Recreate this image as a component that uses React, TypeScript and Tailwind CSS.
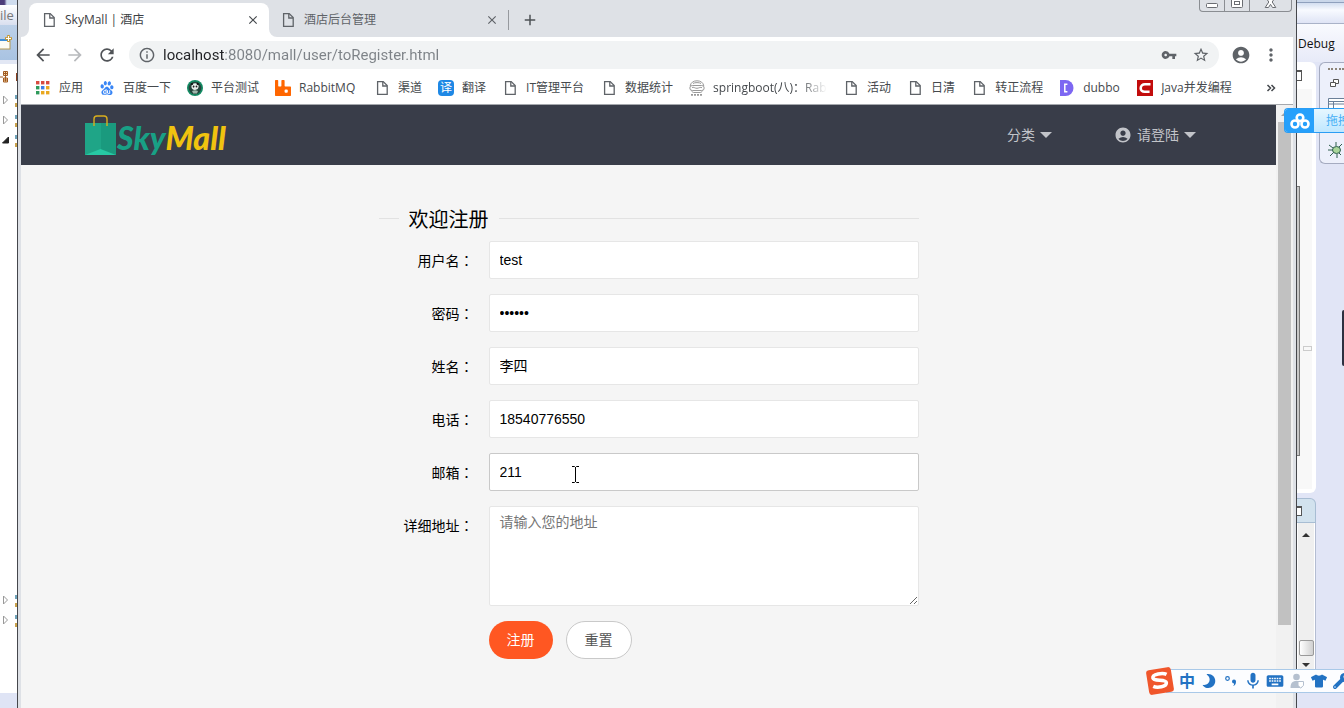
import React from 'react';
import { clsx } from 'clsx';
import {
  MdArrowBack, MdArrowForward, MdRefresh, MdInfoOutline, MdVpnKey, MdStarBorder,
  MdAccountCircle, MdMoreVert, MdClose, MdAdd, MdMic, MdKeyboard,
} from 'react-icons/md';
import { SiBaidu, SiRabbitmq } from 'react-icons/si';
import { FaMoon, FaTshirt, FaWrench } from 'react-icons/fa';

const uiFont = "font-['Open_Sans','Noto_Sans_CJK_SC',sans-serif]";
const pageFont = "font-['Liberation_Sans','Noto_Sans_CJK_SC',sans-serif]";

const FileIcon = () => (
  <svg viewBox="0 0 16 16" className="h-4 w-4 shrink-0" fill="none" stroke="#5f6368" strokeWidth="1.3">
    <path d="M3.6 1.6h5.6l4 4v8.8H3.6z" />
    <path d="M8.8 1.8v4.2h4.2" />
  </svg>
);

const AppsIcon = () => (
  <svg viewBox="0 0 16 16" className="h-4 w-4 shrink-0">
    {['#d84b40', '#d84b40', '#d84b40', '#2e9a5b', '#3d7ee8', '#e9a820', '#2e9a5b', '#e9a820', '#e9a820'].map((c, i) => (
      <rect key={i} x={1 + (i % 3) * 5} y={1 + Math.floor(i / 3) * 5} width="3.4" height="3.4" fill={c} />
    ))}
  </svg>
);

const PandaIcon = () => (
  <svg viewBox="0 0 16 16" className="h-4 w-4 shrink-0">
    <circle cx="8" cy="8" r="8" fill="#138a63" />
    <circle cx="8" cy="8" r="6.3" fill="#24443b" />
    <path d="M4.4 6.7c0-2.2 1.6-3.5 3.7-3.5s3.5 1.4 3.5 3.4-1.4 3.3-3.6 3.3-3.6-1.2-3.6-3.2z" fill="#e9efec" />
    <circle cx="5" cy="4" r="1.1" fill="#111" />
    <circle cx="10.7" cy="3.9" r="1.1" fill="#111" />
    <ellipse cx="6.6" cy="6.6" rx=".9" ry="1.1" fill="#222" />
    <ellipse cx="9.5" cy="6.5" rx=".9" ry="1.1" fill="#222" />
    <path d="M5 11c2-1 4-1 6 0l-1 2.4H6.2z" fill="#9fb5ab" />
  </svg>
);

const BurgerIcon = () => (
  <svg viewBox="0 0 16 16" className="h-4 w-4 shrink-0" fill="none" stroke="#999" strokeWidth="1">
    <path d="M1.2 6C1.6 2.6 4.4.8 8 .8s6.4 1.8 6.800 5.200" />
    <path d="M4 3.500c1.500-1.200 6.500-1.200 8 0" />
    <rect x=".8" y="5.500" width="14.400" height="5" rx="2.500" />
    <path d="M3 7.500c1.500-1 3 1 5 .8s3.500-1.500 5-.6" />
    <path d="M2.400 10.500c.6 1.500 1.600 2 2.600 2h6c1 0 2-.5 2.600-2" />
    <path d="M2 14.800h12" strokeDasharray="2 1" strokeWidth="1.800" />
  </svg>
);

const DubboIcon = () => (
  <svg viewBox="0 0 16 16" className="h-4 w-4 shrink-0">
    <path d="M1 0h5.500a8 8 0 0 1 0 16H1z" fill="#7d67f2" />
    <path d="M8.400 4.200H5.800v7.600h2.600" fill="none" stroke="#fff" strokeWidth="1.500" />
  </svg>
);

const CsdnIcon = () => (
  <svg viewBox="0 0 16 16" className="h-4 w-4 shrink-0">
    <rect width="16" height="16" fill="#c20c0c" />
    <path d="M13.500 4.300H8c-2.600 0-4.300 1.500-4.300 3.900 0 2.300 1.500 3.500 4 3.500h4.900" fill="none" stroke="#fff" strokeWidth="2.600" />
  </svg>
);

const TranslateIcon = () => (
  <span className="flex h-4 w-4 shrink-0 items-center justify-center rounded-sm bg-[#1e88e5] text-xs leading-4 text-white">译</span>
);

const bookmarks = [
  { label: '应用', icon: <AppsIcon /> },
  { label: '百度一下', icon: <SiBaidu className="h-4 w-4 shrink-0 p-px text-[#3885f5]" /> },
  { label: '平台测试', icon: <PandaIcon /> },
  { label: 'RabbitMQ', icon: <SiRabbitmq className="h-4 w-4 shrink-0 text-[#f60]" />, width: 'w-[59px]' },
  { label: '渠道', icon: <FileIcon /> },
  { label: '翻译', icon: <TranslateIcon /> },
  { label: 'IT管理平台', icon: <FileIcon />, width: 'w-[59px]' },
  { label: '数据统计', icon: <FileIcon /> },
  { label: 'springboot(八)：RabbitMQ', icon: <BurgerIcon />, width: 'w-[114px]', fade: true },
  { label: '活动', icon: <FileIcon /> },
  { label: '日清', icon: <FileIcon /> },
  { label: '转正流程', icon: <FileIcon /> },
  { label: 'dubbo', icon: <DubboIcon />, width: 'w-[38px]' },
  { label: 'Java并发编程', icon: <CsdnIcon />, width: 'w-[73px]' },
];

const TabFlare = ({ className }: { className: string }) => (
  <svg viewBox="0 0 8 8" className={clsx('absolute bottom-0 h-2 w-2', className)}>
    <path d="M8 0v8H0a8 8 0 0 0 8-8z" fill="#fff" />
  </svg>
);

const TitleBar = () => (
  <div className="flex h-[37px] shrink-0 pl-2">
    <div className="relative mt-[3px] flex w-[240px] items-center gap-2 rounded-t-lg bg-white pr-[9px] pl-3 text-xs text-[#3c4043]">
      <TabFlare className="-left-2" />
      <FileIcon />
      <span className="flex-1">SkyMall | 酒店</span>
      <button aria-label="关闭标签页"><MdClose className="h-3.5 w-3.5 text-[#45494d]" /></button>
      <TabFlare className="-right-2 -scale-x-100" />
    </div>
    <div className="mt-[3px] flex w-[239px] items-center gap-2 pr-[9px] pl-[11px] text-xs text-[#5f6368]">
      <FileIcon />
      <span className="flex-1">酒店后台管理</span>
      <button aria-label="关闭标签页"><MdClose className="h-3.5 w-3.5" /></button>
    </div>
    <div className="mt-2.5 h-5 w-px bg-[#96999e]" />
    <button aria-label="新标签页" className="mt-[3px] ml-3"><MdAdd className="h-[18px] w-[18px] text-[#4d5156]" /></button>
    <div className="flex-1" />
    <div className="mr-px flex h-3 divide-x divide-[#8a8d92] overflow-hidden rounded-b border border-t-0 border-[#8a8d92] text-[#6a6d72]">
      <button aria-label="最小化" className="w-[25px]">
        <svg viewBox="0 0 25 12" className="h-3" fill="#fff" stroke="currentColor"><rect x="6.500" y="3.500" width="11" height="4" rx="1" /></svg>
      </button>
      <button aria-label="最大化" className="w-[25px]">
        <svg viewBox="0 0 25 12" className="h-3" fill="#fff" stroke="currentColor"><rect x="6.500" y="-3.500" width="11" height="11" rx="1" /><rect x="9.500" y="1.500" width="5" height="3" /></svg>
      </button>
      <button aria-label="关闭" className="w-[41px]">
        <svg viewBox="0 0 41 12" className="h-3" fill="#fff" stroke="currentColor"><path d="M15.500-3h3l2 3 2-3h3l-3.300 5 3.600 5.500h-3.300l-2-3.200-2 3.200h-3.300l3.600-5.500z" /></svg>
      </button>
    </div>
  </div>
);

const Toolbar = () => (
  <div className="flex h-9 shrink-0 items-center gap-3.5 bg-white px-3.5 text-[#5f6368]">
    <div className="flex gap-4">
      <button aria-label="后退"><MdArrowBack className="h-4 w-4 scale-125 text-[#505357]" /></button>
      <button aria-label="前进"><MdArrowForward className="h-4 w-4 scale-125 text-[#b8babd]" /></button>
      <button aria-label="刷新"><MdRefresh className="h-4 w-4 scale-125 text-[#505357]" /></button>
    </div>
    <div className="flex h-7 flex-1 items-center gap-2 rounded-full bg-[#f1f3f4] px-2.5">
      <MdInfoOutline className="h-4 w-4 shrink-0 scale-110" />
      <input
        aria-label="地址"
        readOnly
        value="localhost:8080/mall/user/toRegister.html"
        className="min-w-0 flex-1 bg-[linear-gradient(90deg,#202124_61px,#7d8287_61px)] bg-clip-text font-['Roboto',sans-serif] text-[15px] text-transparent outline-none"
      />
      <MdVpnKey className="h-4 w-4 shrink-0" />
      <MdStarBorder className="ml-2 h-4 w-4 shrink-0 scale-110" />
    </div>
    <button aria-label="用户"><MdAccountCircle className="h-4 w-4 scale-125" /></button>
    <button aria-label="菜单"><MdMoreVert className="h-4 w-4 scale-125" /></button>
  </div>
);

const BookmarkBar = () => (
  <div className="flex h-8 shrink-0 items-center gap-4 border-b border-[#a5a8ad] bg-white px-3.5 pb-0.5 text-xs text-[#45494d]">
    {bookmarks.map((b) => (
      <a key={b.label} href="#" className="flex shrink-0 items-center gap-2">
        {b.icon}
        <span className={clsx('overflow-hidden whitespace-nowrap', b.width, b.fade && 'mask-r-from-75% mask-r-to-100%')}>{b.label}</span>
      </a>
    ))}
    <div className="flex-1" />
    <button aria-label="更多书签" className="pr-1">
      <svg viewBox="0 0 10 8" className="h-2 w-2.5" fill="none" stroke="#45494d" strokeWidth="1.500"><path d="M1.500 1l3 3-3 3M5.500 1l3 3-3 3" /></svg>
    </button>
  </div>
);

const Caret = () => <svg viewBox="0 0 12 6" className="h-1.5 w-3 fill-[#c2c4c9]"><path d="M0 0h12L6 6z" /></svg>;

const SiteHeader = () => (
  <header className="flex h-[60px] shrink-0 items-center justify-between bg-[#393d49] pr-20 pl-16 text-sm text-[#c2c4c9]">
    <a href="#" className="flex items-end">
      <svg viewBox="0 0 32 42" className="h-[42px] w-8">
        <path d="M0 9h31v32H0z" fill="#1fa587" />
        <path d="M16 9h15v32H16z" fill="#1a9a7e" />
        <path d="M0 41l15.500-6L31 41z" fill="#27c9a4" />
        <path d="M9 12V5q0-3 3-3h7q3 0 3 3v7" fill="none" stroke="#d9ae1e" strokeWidth="1.400" />
      </svg>
      <span className="font-['Lato',sans-serif] text-[32px] leading-9 font-black text-[#18a085] italic">Sky<span className="text-[#f0c30f]">Mall</span></span>
    </a>
    <nav className="flex gap-[62px]">
      <button className="flex items-center gap-[5px]">分类<Caret /></button>
      <button className="flex items-center gap-[5px]">
        <MdAccountCircle className="h-[18px] w-[18px]" />请登陆<Caret />
      </button>
    </nav>
  </header>
);

interface FieldLabelProps {
  id: string;
  text: string;
}

const FieldLabel = ({ id, text }: FieldLabelProps) => (
  <label htmlFor={id} className="w-[110px] pr-[15px] text-right leading-[38px]">
    {text}<span className="font-['Noto_Sans_CJK_TC',sans-serif]" lang="zh-TW">：</span>
  </label>
);

interface FieldProps {
  id: string;
  label: string;
  value: string;
  type?: string;
  active?: boolean;
  children?: React.ReactNode;
}

const Field = ({ id, label, value, type = 'text', active, children }: FieldProps) => (
  <div className="relative mb-[15px] flex h-[38px]">
    <FieldLabel id={id} text={label} />
    <input
      id={id}
      type={type}
      defaultValue={value}
      className={clsx('flex-1 rounded-xs border bg-white px-2.5 outline-none', active ? 'border-[#c9c9c9]' : 'border-[#e6e6e6]')}
    />
    {children}
  </div>
);

const RegisterForm = () => (
  <form className="mx-auto w-[540px] pt-[39px] text-sm text-black">
    <fieldset className="border-t border-[#e2e2e2]">
      <legend className="ml-5 px-2.5 pt-1 text-xl leading-6">欢迎注册</legend>
    </fieldset>
    <div className="pt-[9px]">
      <Field id="username" label="用户名" value="test" />
      <Field id="password" label="密码" value="123456" type="password" />
      <Field id="name" label="姓名" value="李四" />
      <Field id="phone" label="电话" value="18540776550" />
      <Field id="email" label="邮箱" value="211" active>
        <svg viewBox="0 0 9 17" className="absolute top-[13px] left-48 h-[17px] w-[9px]" fill="none" stroke="#000">
          <path d="M1 .5h2.500l1 1 1-1H8M4.500 1v15M1 16.500h2.500l1-1 1 1H8" />
        </svg>
      </Field>
      <div className="mb-[15px] flex items-start">
        <FieldLabel id="address" text="详细地址" />
        <textarea
          id="address"
          placeholder="请输入您的地址"
          className="h-[100px] flex-1 resize-y rounded-xs border border-[#e6e6e6] bg-white px-2.5 py-[5px] leading-5 outline-none placeholder:text-[#757575]"
        />
      </div>
      <div className="flex gap-[13px] pl-[110px]">
        <button type="button" className="h-[38px] rounded-full bg-[#ff5722] px-[18px] text-white">注册</button>
        <button type="reset" className="h-[38px] rounded-full border border-[#c9c9c9] bg-white px-[18px] text-[#555]">重置</button>
      </div>
    </div>
  </form>
);

const Browser = () => (
  <div className={clsx('flex min-w-0 flex-1 flex-col border-x border-[#45474c] bg-[#dee1e6] px-[3px]', uiFont)}>
    <TitleBar />
    <Toolbar />
    <BookmarkBar />
    <div className={clsx('flex min-h-0 flex-1 bg-[#f5f5f5]', pageFont)}>
      <main className="flex-1">
        <SiteHeader />
        <RegisterForm />
      </main>
      <div className="flex w-[17px] flex-col items-center bg-[#f1f1f1]">
        <div className="flex h-[17px] items-center"><svg viewBox="0 0 8 4" className="h-1 w-2 fill-[#a3a3a3]"><path d="M0 4l4-4 4 4z" /></svg></div>
        <div className="h-[503px] w-[13px] bg-[#c1c1c1]" />
      </div>
    </div>
  </div>
);

const TreeArrow = ({ open = false }: { open?: boolean }) => (
  <div className="flex h-5 items-center justify-between">
    <svg viewBox="0 0 8 10" className="ml-0.5 h-2.5 w-2" stroke="#999" fill="#fff">
      {open ? <path d="M6.500 2v6H.500z" fill="#222" stroke="#222" /> : <path d="M1.500 1l4 4-4 4z" />}
    </svg>
    <svg viewBox="0 0 2 16" className="h-4 w-0.5"><path d="M0 3h2v4H0z" fill="#6fa3ba" /><path d="M0 11h2v4H0z" fill="#c9a24c" /></svg>
  </div>
);

const IdeLeft = () => (
  <div className="flex w-[17px] shrink-0 flex-col overflow-hidden bg-white">
    <div className="h-[5px] bg-linear-to-r from-[#4c3d7a] from-25% to-[#cfdcee] to-40%" />
    <div className={clsx('h-5 bg-linear-to-b from-white to-[#d9dfef] text-[13px] leading-5 text-[#777]', uiFont)}>ile</div>
    <div className="flex h-[35px] items-center bg-linear-to-b from-[#bcd0e8] to-[#a9c3e2]">
      <svg viewBox="0 0 14 16" className="h-4 w-3.5">
        <rect x="-4" y="5" width="14" height="9" fill="#fdfdf5" stroke="#b49a55" />
        <path d="M0 5h10" stroke="#3d8fd8" strokeWidth="2" />
        <path d="M8.500 0v7M5 3.500h7" stroke="#c9962a" strokeWidth="2.500" />
        <path d="M8.500 1v5M6 3.500h5" stroke="#fff" />
      </svg>
    </div>
    <div className="h-1 bg-[#e2e7f4]" />
    <div className="flex h-[26px] items-center justify-between">
      <svg viewBox="0 0 9 12" className="h-3 w-[9px]" fill="#fbe3b0" stroke="#a15a23"><path d="M0 6h3" /><path d="M3.500.500h4v4h-4zM3.500 7h4v4h-4zM3.500 2.500h4M5.500.500v10M3.500 9h4" /></svg>
      <div className="h-2 w-px bg-[#8a4020]" />
    </div>
    <TreeArrow />
    <TreeArrow />
    <TreeArrow open />
    <div className="flex-1" />
    <TreeArrow />
    <TreeArrow />
    <div className="h-[63px]" />
    <div className="h-[15px] bg-[#dfe4f5]" />
  </div>
);

const SmallArrow = ({ down = false }: { down?: boolean }) => (
  <svg viewBox="0 0 8 4" className={clsx('h-1 w-2 fill-[#333]', down && 'rotate-180')}><path d="M0 4l4-4 4 4z" /></svg>
);

const IdeRight = () => (
  <div className={clsx('flex w-[47px] shrink-0 flex-col overflow-hidden bg-[#e1e5f6]', uiFont)}>
    <div className="h-[3px] border-b border-[#8fa0bd] bg-[#cad7ea]" />
    <div className="h-[21px] border-b border-[#a9b2c8] bg-linear-to-b from-[#d3def0] via-[#f8faff] via-35% to-[#dfe4f5]" />
    <button className="h-[38px] bg-linear-to-b from-[#f9fafe] to-[#e7eaf8] pt-0.5 pl-px text-left text-xs text-[#111]">Debug</button>
    <div className="flex min-h-0 flex-1 gap-[3px]">
      <div className="flex w-5 flex-col">
        <div className="flex h-[431px] flex-col rounded-r-md bg-white">
          <div className="mt-2 h-[11px] w-[5px] border border-l-0 border-t-2 border-[#555]" />
          <div className="mt-2 mr-1 mb-1 flex flex-1 bg-[#f8f8f8]">
            <div className="mt-[97px] h-[270px] w-[3px] border border-l-0 border-[#777] bg-[#c8c8c8]" />
            <div className="mt-[257px] ml-[3px] h-[5px] w-[9px] border border-[#ccc]" />
          </div>
        </div>
        <div className="mt-[5px] flex h-[25px] items-center rounded-tr-md border border-l-0 border-[#a8bdd3] bg-[#d2e2ee]">
          <div className="h-2.5 w-[5px] border border-l-0 border-t-2 border-[#555] bg-white" />
        </div>
        <div className="flex flex-1 flex-col border-r border-[#b4bdd2] bg-white pl-px">
          <div className="flex w-4 flex-1 flex-col items-center bg-[#efefef] pt-2.5">
            <SmallArrow />
            <div className="mt-[103px] mb-[7px] h-4 w-[15px] rounded-xs border border-[#999] bg-linear-to-r from-white to-[#d0d0d0]" />
            <SmallArrow down />
          </div>
        </div>
        <div className="h-[39px] bg-[#e1e5f6]" />
      </div>
      <div className="flex-1">
        <div className="flex h-[102px] flex-col rounded-l-md border border-r-0 border-[#a5abc0] bg-[#edf0fb] pl-2">
          <div className="mt-[5px] border-t-2 border-dotted border-[#8d8478]" />
          <svg viewBox="0 0 10 10" className="mt-2 ml-0.5 h-2.5 w-2.5" fill="#fff" stroke="#555"><path d="M3.500 1.500h5v4h-5z" /><path d="M.500 4.500h5v4h-5z" /></svg>
          <svg viewBox="0 0 16 12" className="mt-2.5 h-3 w-4" fill="#fff" stroke="#6a7f99"><path d="M.500.500h16v11H.500zM.500 3.500h16M.500 6h16M5.500 3v9" /></svg>
          <svg viewBox="0 0 16 16" className="mt-8 h-4 w-4" stroke="#2f5e4e" fill="#a9d69a">
            <path d="M1 3l4 3M0 8h5M2 14l4-4M8 0v4M14 2l-4 4M9 16v-4M13 13l-3-3" />
            <ellipse cx="8.500" cy="8" rx="4" ry="3.500" />
          </svg>
        </div>
        <div className="mt-[146px] ml-auto h-14 w-0.5 rounded-l-xs bg-[#2d3040]" />
      </div>
    </div>
  </div>
);

// Netdisk drop target docked to the right edge of the desktop
const NetdiskDock = () => (
  <div className="absolute top-[108px] right-0 flex h-[25px] w-[60px] overflow-hidden rounded-l border border-r-0 border-[#2a9df4] bg-linear-to-b from-[#e6f7ff] to-[#bfe7ff]">
    <div className="flex w-[29px] shrink-0 items-center justify-center bg-[#26a0fb]">
      <svg viewBox="0 0 20 16" className="h-4 w-5" fill="none" stroke="#fff" strokeWidth="2.600">
        <circle cx="10" cy="4.800" r="3.300" /><circle cx="5" cy="11" r="3.500" /><circle cx="15" cy="11" r="3.500" />
      </svg>
    </div>
    <span className={clsx('ml-3 text-xs leading-6 whitespace-nowrap text-[#45aef5]', uiFont)}>拖拽</span>
  </div>
);

const ImeBar = () => (
  <div className="absolute right-0 bottom-[14px] flex h-[26px] w-[198px] items-center">
    <svg viewBox="0 0 28 28" className="z-10 h-7 w-7 shrink-0">
      <g transform="rotate(-9 14 14)">
        <rect x="1.500" y="1.500" width="25" height="25" rx="3" fill="#f0562b" />
        <path d="M21.500 8.500C18 6 7.500 6 7.500 9.800c0 4.200 12.500 2.700 12.500 6.700 0 4.500-10 4-13.500 1.700" fill="none" stroke="#fff" strokeWidth="3.600" />
      </g>
    </svg>
    <div className="-ml-2 flex h-6 flex-1 items-center gap-1.5 overflow-hidden border-y border-[#a9c9e8] bg-[#fcfdff] pl-[13px] text-[#2272c3]">
      <span className={clsx('w-4 shrink-0 text-base leading-5 font-bold', uiFont)}>中</span>
      <FaMoon className="h-4 w-4 shrink-0 -scale-x-100 p-px" />
      <svg viewBox="0 0 16 16" className="h-4 w-4 shrink-0"><circle cx="4.500" cy="5.500" r="1.800" fill="none" stroke="currentColor" strokeWidth="1.200" /><path d="M9 8.500a2 2 0 1 1 4 0c0 2.500-1 4-3 4.500 1-1 1.200-1.600 1-2.500a2 2 0 0 1-2-2z" fill="currentColor" /></svg>
      <MdMic className="h-4 w-4 shrink-0 scale-125" />
      <MdKeyboard className="h-4 w-4 shrink-0 scale-125" />
      <svg viewBox="0 0 16 16" className="h-4 w-4 shrink-0">
        <circle cx="7.500" cy="4" r="3.300" fill="#b5c0cf" />
        <path d="M1.500 15c0-4.500 1.500-7 6-7s5 2 5.500 7z" fill="#b5c0cf" />
        <path d="M9 8.500h5.500v4L11.700 15 9 12.500z" fill="#fff" stroke="#b5c0cf" />
      </svg>
      <FaTshirt className="h-4 w-4 shrink-0" />
      <FaWrench className="h-4 w-4 shrink-0" />
    </div>
  </div>
);

export default function App() {
  return (
    <div className="relative flex h-screen overflow-hidden">
      <IdeLeft />
      <Browser />
      <IdeRight />
      <NetdiskDock />
      <ImeBar />
    </div>
  );
}
